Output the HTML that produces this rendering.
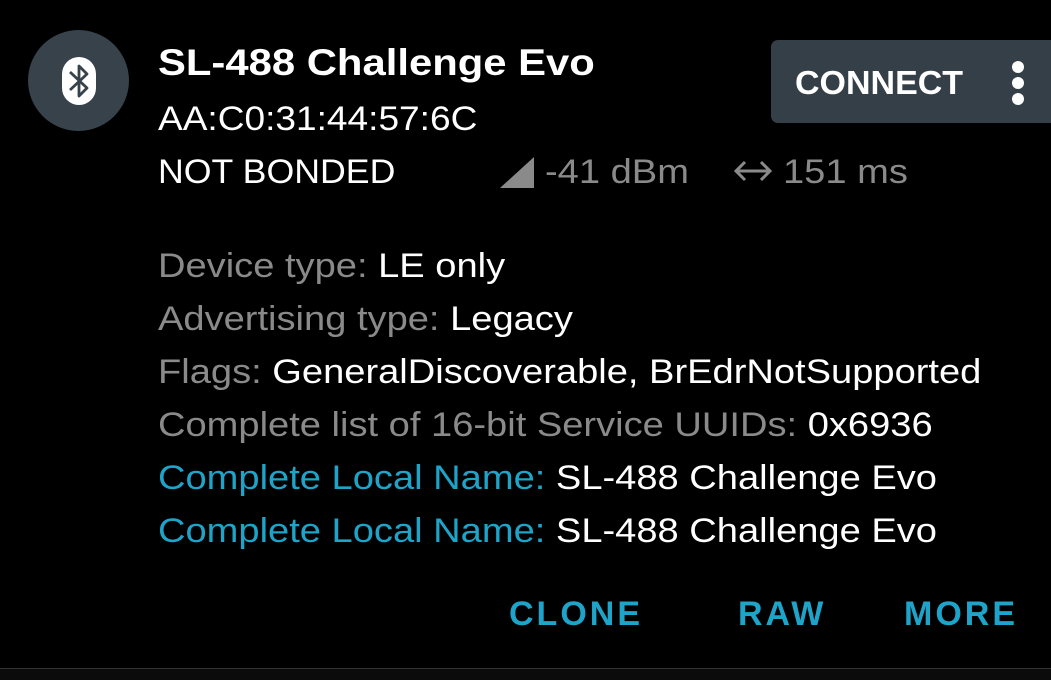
<!DOCTYPE html><html><head><style>
html,body{margin:0;padding:0;background:#000;width:1051px;height:679px;overflow:hidden;font-family:"Liberation Sans",sans-serif;color:#fff}
.a{position:absolute;white-space:nowrap;line-height:1;transform-origin:0 0}
.s{transform:scaleX(1.12)}
.g{color:#8a8a8a}.b{color:#1ea3c9}
</style></head><body>
<div class="a" style="left:28px;top:30px;width:101px;height:101px;border-radius:50%;background:#37424a"></div>
<svg class="a" style="left:60px;top:56px" width="38" height="50" viewBox="0 0 38 50"><rect x="2" y="1" width="34" height="48" rx="17" fill="#fff"/><path d="M10 16 L27 32 L19 40 V10 L27 18 L10 34" stroke="#37424a" stroke-width="2.8" fill="none" stroke-linejoin="round"/></svg>
<div class="a" style="left:158px;top:44px;font-size:37px;font-weight:bold;transform:scaleX(1.13)">SL-488 Challenge Evo</div>
<div class="a" style="left:158px;top:102px;font-size:34px;transform:scaleX(1.09)">AA:C0:31:44:57:6C</div>
<div class="a" style="left:158px;top:155px;font-size:34px;transform:scaleX(1.05)">NOT BONDED</div>
<svg class="a" style="left:500px;top:157px" width="34" height="31"><polygon points="0,31 34,0 34,31" fill="#8a8a8a"/></svg>
<div class="a g s" style="left:545px;top:155px;font-size:34px">-41 dBm</div>
<svg class="a" style="left:733px;top:158px" width="40" height="26" viewBox="0 0 40 26"><path d="M3 13 H37 M12 4 L3 13 L12 22 M28 4 L37 13 L28 22" stroke="#8a8a8a" stroke-width="3" fill="none"/></svg>
<div class="a g s" style="left:783px;top:155px;font-size:34px">151 ms</div>
<div class="a" style="left:771px;top:40px;width:290px;height:83px;border-radius:7px;background:#343f48"></div>
<div class="a" style="left:795px;top:66px;font-size:33px;font-weight:bold;transform:scaleX(1.03)">CONNECT</div>
<div class="a" style="left:1012px;top:61px;width:12px;height:12px;border-radius:50%;background:#fff"></div>
<div class="a" style="left:1012px;top:77px;width:12px;height:12px;border-radius:50%;background:#fff"></div>
<div class="a" style="left:1012px;top:93px;width:12px;height:12px;border-radius:50%;background:#fff"></div>
<div class="a s" style="left:158px;top:249px;font-size:34px"><span class="g">Device type: </span>LE only</div>
<div class="a s" style="left:158px;top:302px;font-size:34px"><span class="g">Advertising type: </span>Legacy</div>
<div class="a s" style="left:158px;top:355px;font-size:34px"><span class="g">Flags: </span>GeneralDiscoverable, BrEdrNotSupported</div>
<div class="a s" style="left:158px;top:408px;font-size:34px"><span class="g">Complete list of 16-bit Service UUIDs: </span>0x6936</div>
<div class="a s" style="left:158px;top:461px;font-size:34px"><span class="b">Complete Local Name: </span>SL-488 Challenge Evo</div>
<div class="a s" style="left:158px;top:514px;font-size:34px"><span class="b">Complete Local Name: </span>SL-488 Challenge Evo</div>
<div class="a b" style="left:509px;top:597px;font-size:34px;font-weight:bold;letter-spacing:3px">CLONE</div>
<div class="a b" style="left:738px;top:597px;font-size:34px;font-weight:bold;letter-spacing:3px">RAW</div>
<div class="a b" style="left:904px;top:597px;font-size:34px;font-weight:bold;letter-spacing:3px">MORE</div>
<div class="a" style="left:0;top:668px;width:1051px;height:11px;background:#0b0b0b;border-top:1px solid #333"></div>
</body></html>
